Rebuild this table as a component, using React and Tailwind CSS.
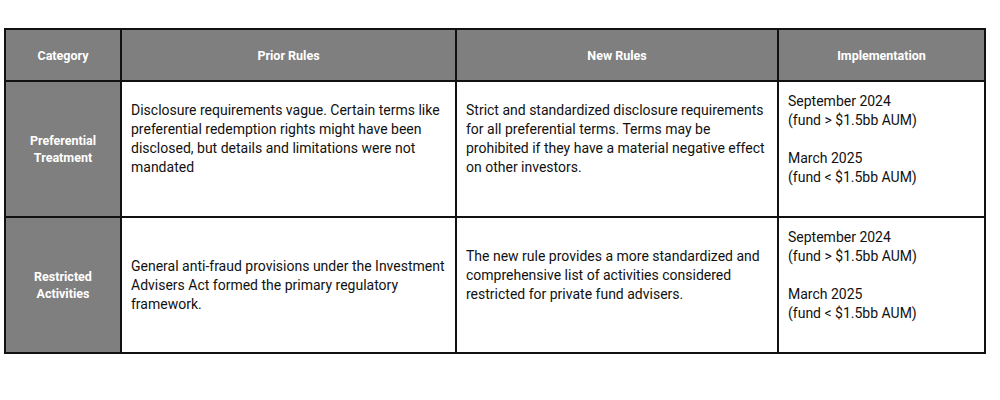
const rows = [
  {
    category: ["Preferential", "Treatment"],
    prior:
      "Disclosure requirements vague. Certain terms like preferential redemption rights might have been disclosed, but details and limitations were not mandated",
    next:
      "Strict and standardized disclosure requirements for all preferential terms. Terms may be prohibited if they have a material negative effect on other investors.",
    priorPad: "pb-[20px]",
    nextPad: "pb-[20px]",
    implPad: "pb-[19px]",
  },
  {
    category: ["Restricted", "Activities"],
    prior:
      "General anti-fraud provisions under the Investment Advisers Act formed the primary regulatory framework.",
    next:
      "The new rule provides a more standardized and comprehensive list of activities considered restricted for private fund advisers.",
    priorPad: "pb-0",
    nextPad: "pb-[20px]",
    implPad: "pb-[20px]",
  },
];

function Impl() {
  return (
    <div>
      <p>September 2024</p>
      <p>(fund &gt; $1.5bb AUM)</p>
      <p className="mt-[19px]">March 2025</p>
      <p>(fund &lt; $1.5bb AUM)</p>
    </div>
  );
}

export default function App() {
  return (
    <div
      className="w-[1000px] h-[400px] bg-white pt-[28px] pl-[4px]"
      style={{ fontFamily: "Roboto, 'Liberation Sans', sans-serif" }}
    >
      <table className="border-collapse table-fixed w-[980px] text-[#111]">
        <colgroup>
          <col className="w-[116px]" />
          <col className="w-[335px]" />
          <col className="w-[322px]" />
          <col className="w-[207px]" />
        </colgroup>
        <thead>
          <tr className="h-[52px] bg-[#7f7f7f] text-white text-[12.5px] font-bold">
            <th className="border-2 border-[#111] align-middle pt-[3px]">Category</th>
            <th className="border-2 border-[#111] align-middle pt-[3px]">Prior Rules</th>
            <th className="border-2 border-[#111] align-middle pt-[3px]">New Rules</th>
            <th className="border-2 border-[#111] align-middle pt-[3px]">Implementation</th>
          </tr>
        </thead>
        <tbody className="text-[14px] leading-[19px]">
          {rows.map((r) => (
            <tr key={r.prior} className="h-[136px]">
              <td className="border-2 border-[#111] bg-[#7f7f7f] text-white text-[12.5px] leading-[17px] font-bold text-center align-middle">
                {r.category[0]}
                <br />
                {r.category[1]}
              </td>
              <td className={`border-2 border-[#111] align-middle pl-[9px] pr-[10px] ${r.priorPad}`}>
                {r.prior}
              </td>
              <td className={`border-2 border-[#111] align-middle pl-[9px] pr-[8px] ${r.nextPad}`}>
                {r.next}
              </td>
              <td className={`border-2 border-[#111] align-middle pl-[9px] pr-[8px] ${r.implPad}`}>
                <Impl />
              </td>
            </tr>
          ))}
        </tbody>
      </table>
    </div>
  );
}
